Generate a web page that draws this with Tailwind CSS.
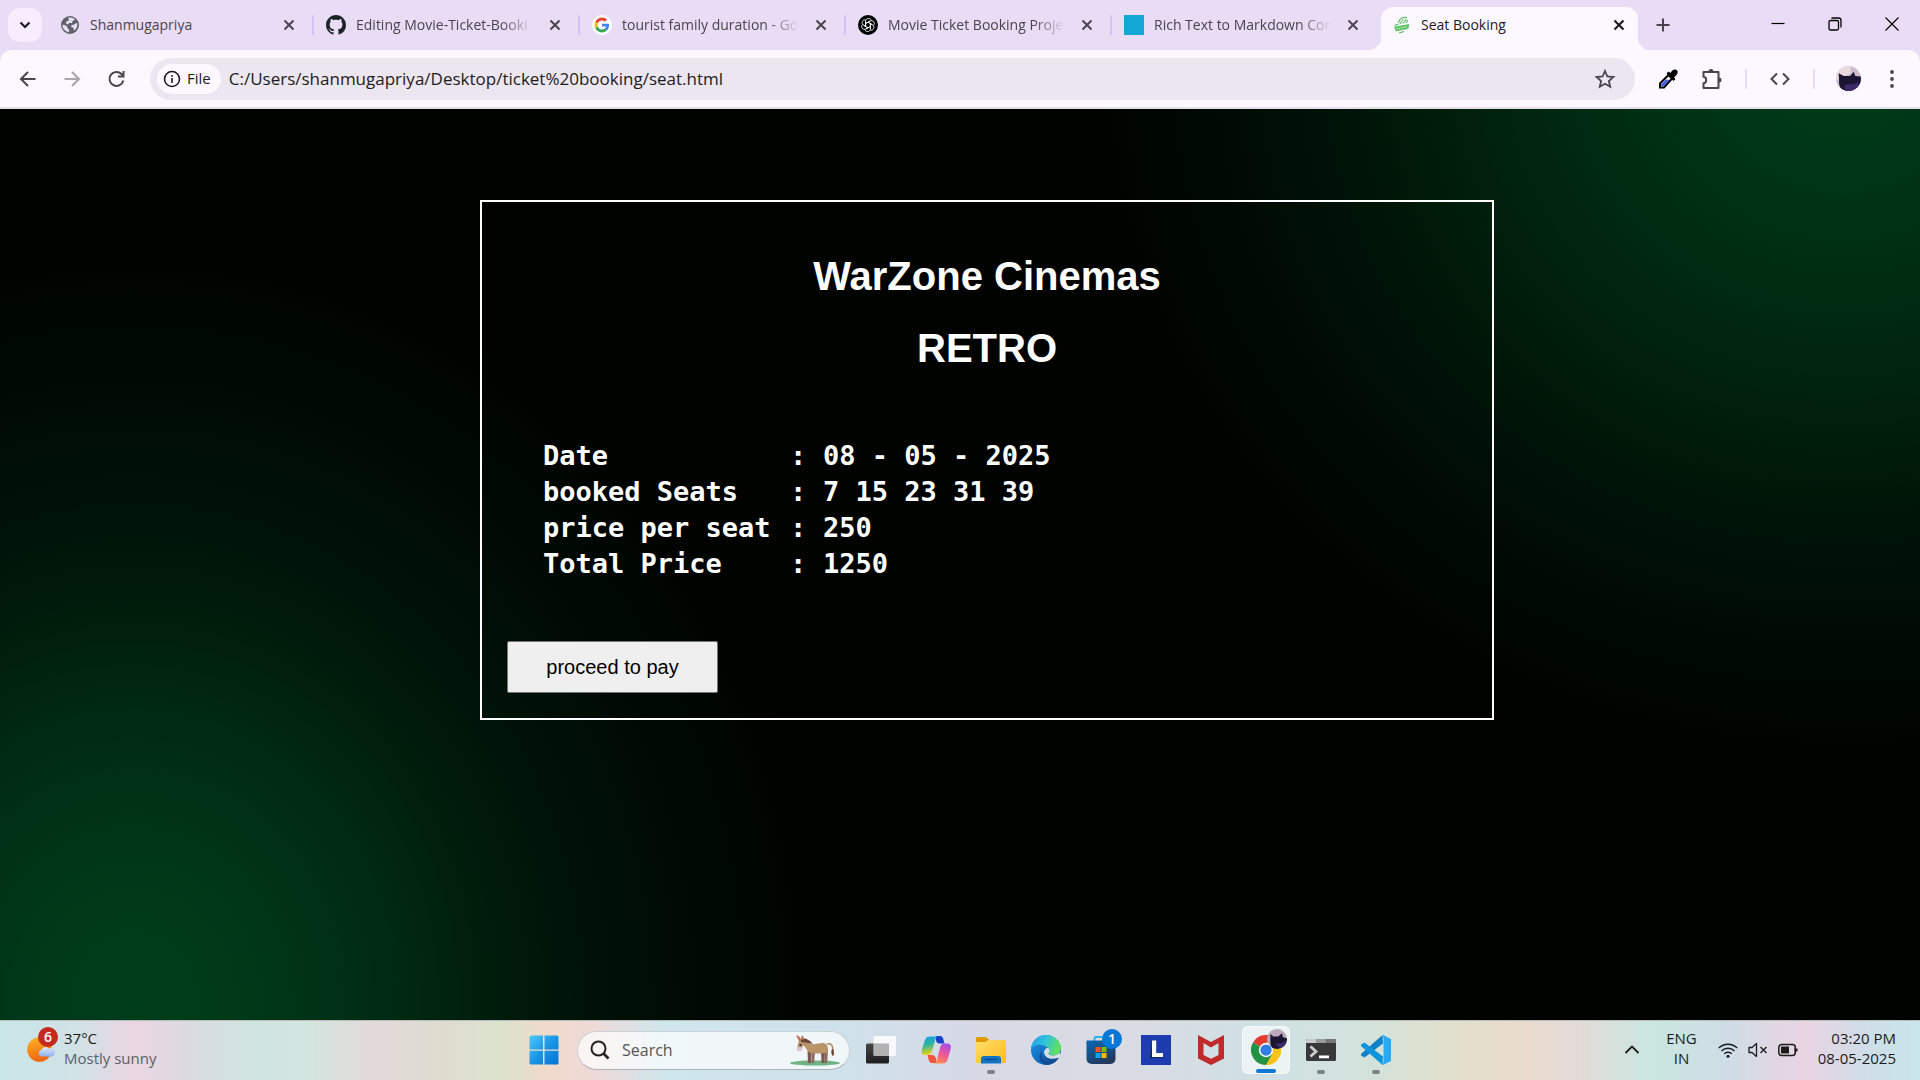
<!DOCTYPE html>
<html lang="en">
<head>
<meta charset="utf-8">
<title>Seat Booking</title>
<meta name="viewport" content="width=device-width, initial-scale=1">
<script src="https://cdn.jsdelivr.net/npm/@tailwindcss/browser@4"></script>
</head>
<body class="flex h-screen flex-col overflow-hidden bg-black font-['Open_Sans',sans-serif]">

<!-- Browser chrome -->
<header class="shrink-0 bg-[#e9ddf5] text-[#49454f]">
  <div class="flex h-[50px] pl-2">
    <button aria-label="Search tabs" class="mt-2 mr-1.5 grid size-[34px] shrink-0 place-items-center rounded-xl bg-[#f7edfe] text-[#1d1b20]">
      <svg class="size-5" viewBox="0 0 20 20" fill="none" stroke="currentColor" stroke-width="2.2"><path d="M5.500 7.500 10 12l4.500-4.500"/></svg>
    </button>

    <div class="flex w-[266px] min-w-0 items-center pl-3">
      <svg class="size-5 shrink-0" viewBox="0 0 20 20"><circle cx="10" cy="10" r="9" fill="#5f6368"/><path d="M2.500 9.500c2 .8 3.200.6 4.300 1.800 1 1 .4 1.900 1.500 2.600.9.600 1 1.200.7 3.300C5 16.500 2.200 13.500 2.500 9.500zM8.200 2.800c2.800-.6 5 .2 6.600 1.700-.8 1.200-1.600.7-2.200 1.600-.5.8.1 1.700-1 2-1.100.3-1.200-.6-2.300-.2-1.200.5-.6 1.600-1.800 1.400-1.300-.2-1.700-1.500-1.300-2.500.6-1.300 2.500-.6 2.700-1.900.1-.9-.9-1.200-.7-2.100zM17.300 8c.4 3-.7 5.700-3 7.400-.8-.6-.2-1.600-.9-2.400-.7-.8-2-.3-2.200-1.500-.1-1.100.8-1.700 2-1.800 1.700-.1 1.600-1.500 4.100-1.700z" fill="#e9ddf5"/></svg>
      <span class="mr-3 ml-2.5 min-w-0 flex-1 overflow-hidden text-sm leading-6 whitespace-nowrap">Shanmugapriya</span>
      <button aria-label="Close tab" class="grid size-5 shrink-0 place-items-center"><svg class="size-3" viewBox="0 0 12 12" stroke="currentColor" stroke-width="2"><path d="m1.500 1.500 9 9m0-9-9 9"/></svg></button>
      <span class="ml-[13px] h-5 w-0.5 shrink-0 rounded bg-[#d4c0fb]"></span>
    </div>

    <div class="flex w-[266px] min-w-0 items-center pl-3">
      <svg class="size-5 shrink-0" viewBox="0 0 16 16" fill="#1f2328"><path d="M8 0C3.580 0 0 3.580 0 8c0 3.540 2.290 6.530 5.470 7.590.4.070.55-.17.55-.38 0-.19-.01-.82-.01-1.490-2.010.37-2.530-.49-2.690-.94-.09-.23-.48-.94-.82-1.130-.28-.15-.68-.52-.01-.53.63-.01 1.080.58 1.230.82.72 1.210 1.870.87 2.330.66.07-.52.28-.87.51-1.070-1.780-.2-3.640-.89-3.640-3.950 0-.87.31-1.590.82-2.150-.08-.2-.36-1.020.08-2.120 0 0 .67-.21 2.200.82.64-.18 1.320-.27 2-.27s1.360.09 2 .27c1.530-1.040 2.200-.82 2.200-.82.44 1.100.16 1.920.08 2.120.51.56.82 1.270.82 2.150 0 3.070-1.870 3.750-3.650 3.950.29.25.54.73.54 1.480 0 1.070-.01 1.930-.01 2.200 0 .21.15.46.55.38A8.010 8.010 0 0 0 16 8c0-4.420-3.580-8-8-8z"/></svg>
      <span class="mr-3 ml-2.5 min-w-0 flex-1 overflow-hidden text-sm leading-6 whitespace-nowrap [mask-image:linear-gradient(to_right,black_82%,transparent)]">Editing Movie-Ticket-Booki</span>
      <button aria-label="Close tab" class="grid size-5 shrink-0 place-items-center"><svg class="size-3" viewBox="0 0 12 12" stroke="currentColor" stroke-width="2"><path d="m1.500 1.500 9 9m0-9-9 9"/></svg></button>
      <span class="ml-[13px] h-5 w-0.5 shrink-0 rounded bg-[#d4c0fb]"></span>
    </div>

    <div class="flex w-[266px] min-w-0 items-center pl-3">
      <svg class="size-5 shrink-0" viewBox="0 0 20 20"><circle cx="10" cy="10" r="10" fill="#fff"/><g transform="translate(2.600 2.600) scale(.308)"><path fill="#EA4335" d="M24 9.500c3.540 0 6.710 1.220 9.210 3.600l6.850-6.850C35.900 2.380 30.470 0 24 0 14.620 0 6.510 5.380 2.560 13.220l7.980 6.190C12.430 13.720 17.740 9.500 24 9.500z"/><path fill="#4285F4" d="M46.980 24.550c0-1.570-.15-3.090-.38-4.550H24v9.020h12.940c-.58 2.960-2.260 5.480-4.780 7.180l7.730 6c4.510-4.180 7.090-10.360 7.090-17.650z"/><path fill="#FBBC05" d="M10.530 28.590c-.48-1.450-.76-2.990-.76-4.590s.27-3.140.76-4.590l-7.980-6.190C.92 16.460 0 20.120 0 24c0 3.880.92 7.540 2.560 10.780l7.970-6.190z"/><path fill="#34A853" d="M24 48c6.480 0 11.930-2.130 15.890-5.810l-7.730-6c-2.150 1.450-4.920 2.300-8.160 2.300-6.260 0-11.570-4.220-13.470-9.910l-7.980 6.190C6.510 42.620 14.620 48 24 48z"/></g></svg>
      <span class="mr-3 ml-2.5 min-w-0 flex-1 overflow-hidden text-sm leading-6 whitespace-nowrap [mask-image:linear-gradient(to_right,black_82%,transparent)]">tourist family duration - Go</span>
      <button aria-label="Close tab" class="grid size-5 shrink-0 place-items-center"><svg class="size-3" viewBox="0 0 12 12" stroke="currentColor" stroke-width="2"><path d="m1.500 1.500 9 9m0-9-9 9"/></svg></button>
      <span class="ml-[13px] h-5 w-0.5 shrink-0 rounded bg-[#d4c0fb]"></span>
    </div>

    <div class="flex w-[266px] min-w-0 items-center pl-3">
      <svg class="size-5 shrink-0" viewBox="0 0 20 20"><circle cx="10" cy="10" r="10" fill="#000"/><g fill="none" stroke="#fff" stroke-width=".8"><path id="knot" d="M7.600 11.400V6.400c0-3.600 4.900-4 5.600-.9M7.600 8.600l4.300-2.500"/><use href="#knot" transform="rotate(60 10 10)"/><use href="#knot" transform="rotate(120 10 10)"/><use href="#knot" transform="rotate(180 10 10)"/><use href="#knot" transform="rotate(240 10 10)"/><use href="#knot" transform="rotate(300 10 10)"/></g></svg>
      <span class="mr-3 ml-2.5 min-w-0 flex-1 overflow-hidden text-sm leading-6 whitespace-nowrap [mask-image:linear-gradient(to_right,black_82%,transparent)]">Movie Ticket Booking Proje</span>
      <button aria-label="Close tab" class="grid size-5 shrink-0 place-items-center"><svg class="size-3" viewBox="0 0 12 12" stroke="currentColor" stroke-width="2"><path d="m1.500 1.500 9 9m0-9-9 9"/></svg></button>
      <span class="ml-[13px] h-5 w-0.5 shrink-0 rounded bg-[#d4c0fb]"></span>
    </div>

    <div class="flex w-[266px] min-w-0 items-center pl-3">
      <span class="size-5 shrink-0 bg-[#14a8d6]"></span>
      <span class="mr-3 ml-2.5 min-w-0 flex-1 overflow-hidden text-sm leading-6 whitespace-nowrap [mask-image:linear-gradient(to_right,black_82%,transparent)]">Rich Text to Markdown Con</span>
      <button aria-label="Close tab" class="mr-[15px] grid size-5 shrink-0 place-items-center"><svg class="size-3" viewBox="0 0 12 12" stroke="currentColor" stroke-width="2"><path d="m1.500 1.500 9 9m0-9-9 9"/></svg></button>
    </div>

    <div class="relative mt-[7px] ml-[3px] flex h-[43px] w-[257px] min-w-0 items-center rounded-t-xl bg-[#fdf7ff] pr-[9px] pb-[7px] pl-3 text-[#1d1b20]">
      <span class="absolute bottom-0 -left-3 size-3 bg-[radial-gradient(circle_at_0_0,transparent_12px,#fdf7ff_12px)]"></span>
      <span class="absolute -right-3 bottom-0 size-3 bg-[radial-gradient(circle_at_100%_0,transparent_12px,#fdf7ff_12px)]"></span>
      <svg class="size-[18px] shrink-0" viewBox="0 0 18 18" fill="none" stroke="#4fba57"><path d="m1.500 11 14.500-2.500-1 4L3 15z" fill="#5cc463" stroke-width=".6"/><path d="m3.500 13 10.500-2.200" stroke="#d9f5da" stroke-dasharray="1.500 1"/><path d="M5.500 7C6 3 9.500 1 14 1.500M7 8l3-4.500M10 7.500 13.500 3M13 7l2-3M1.500 9.500l4-1.500M6 17l5-1.500" stroke-width="1.100"/></svg>
      <span class="mr-3 ml-2.5 min-w-0 flex-1 overflow-hidden text-sm leading-6 whitespace-nowrap">Seat Booking</span>
      <button aria-label="Close tab" class="grid size-5 shrink-0 place-items-center"><svg class="size-3" viewBox="0 0 12 12" stroke="currentColor" stroke-width="2.200"><path d="m1.500 1.500 9 9m0-9-9 9"/></svg></button>
    </div>

    <button aria-label="New tab" class="ml-[13px] grid size-6 shrink-0 place-items-center self-center"><svg class="size-4" viewBox="0 0 16 16" stroke="currentColor" stroke-width="2"><path d="M8 1.500v13M1.500 8h13"/></svg></button>
    <div class="ml-auto flex h-12 shrink-0 text-black">
      <button aria-label="Minimize" class="grid w-[57px] place-items-center"><svg class="size-3.5" viewBox="0 0 14 14" stroke="currentColor" stroke-width="1.200"><path d="M.5 6.500h13"/></svg></button>
      <button aria-label="Restore" class="grid w-[57px] place-items-center"><svg class="size-3.5" viewBox="0 0 14 14" fill="none" stroke="currentColor" stroke-width="1.300"><rect x="1" y="3.500" width="9.500" height="9.500" rx="1.500"/><path d="M3.500 1h7q2.500 0 2.500 2.500v7"/></svg></button>
      <button aria-label="Close window" class="grid w-[57px] place-items-center"><svg class="size-3.5" viewBox="0 0 14 14" stroke="currentColor" stroke-width="1.200"><path d="m.5.5 13 13m0-13-13 13"/></svg></button>
    </div>
  </div>

  <div class="flex h-[59px] items-center rounded-t-xl border-b-2 border-[#e6dfe9] bg-[#fdf7ff] px-2.5">
    <nav aria-label="History" class="flex shrink-0 gap-2">
      <button aria-label="Back" class="grid size-9 place-items-center"><svg class="size-5" viewBox="0 0 20 20" fill="none" stroke="currentColor" stroke-width="2"><path d="M17.500 10H3m7-7-7 7 7 7"/></svg></button>
      <button aria-label="Forward" class="grid size-9 place-items-center text-[#a9a4ad]"><svg class="size-5" viewBox="0 0 20 20" fill="none" stroke="currentColor" stroke-width="2"><path d="M2.500 10H17m-7-7 7 7-7 7"/></svg></button>
      <button aria-label="Reload" class="grid size-9 place-items-center"><svg class="size-5" viewBox="0 0 20 20" fill="none" stroke="currentColor" stroke-width="2"><path d="M17.300 11.500A7 7 0 1 1 15.500 5l2 2"/><path d="M17.500 2v5.500H12"/></svg></button>
    </nav>
    <div class="ml-4 flex h-[42px] min-w-0 flex-1 items-center rounded-full bg-[#ece6f0] pr-[18px] pl-[7px] text-[#1d1b20]">
      <button class="flex h-[30px] shrink-0 items-center gap-1.5 rounded-full bg-[#fdf7ff] px-1.5 pr-2.5 text-[15px] font-medium">
        <svg class="size-[18px]" viewBox="0 0 18 18" fill="none" stroke="currentColor" stroke-width="1.600"><circle cx="9" cy="9" r="7.500"/><path d="M9 8v5M9 5v1.800"/></svg>File
      </button>
      <input aria-label="Address" value="C:/Users/shanmugapriya/Desktop/ticket%20booking/seat.html" class="ml-2 min-w-0 flex-1 bg-transparent text-[17px] leading-6 outline-none">
      <button aria-label="Bookmark this tab" class="shrink-0 text-[#49454f]"><svg class="size-6" viewBox="0 0 24 24" fill="none" stroke="currentColor" stroke-width="1.800"><path d="m12 4 2.400 5.500 6 .5-4.500 4 1.300 5.800-5.200-3-5.200 3L8.100 14l-4.500-4 6-.5z"/></svg></button>
    </div>
    <div class="ml-[15px] flex shrink-0 items-center">
      <button aria-label="Color picker" class="grid size-9 place-items-center"><svg class="size-5" viewBox="0 0 20 20"><path d="M2 18.500v-4L10.500 6l3.500 3.500L6 18.500z" fill="#fff" stroke="#000" stroke-width="2"/><path d="M3.200 17.300V15L8 10.500l3.500.5-6 6.300z" fill="#4763e0"/><path d="m8.500 4.500 2-2 2 1.500c1-2 3-4 5-3.400 2.500.8 3 3.400 1 5.400l-2.500 2.500L17.500 10l-2 2z"/></svg></button>
      <button aria-label="Extensions" class="ml-2 grid size-9 place-items-center"><svg class="size-6" viewBox="0 0 24 24" fill="none" stroke="currentColor" stroke-width="2"><path d="M3.500 5h15v16h-15v-4.700c3.600-.4 3.600-6.200 0-6.600z" stroke-linejoin="round"/><path d="M8.500 4.500a2.500 2.500 0 0 1 5 0zM19 10.500a2.500 2.500 0 0 1 0 5z" fill="currentColor" stroke="none"/></svg></button>
      <span class="mx-[15px] h-5 w-0.5 bg-[#e8dbfc]"></span>
      <button aria-label="Developer tools" class="grid size-9 place-items-center"><svg class="size-5" viewBox="0 0 20 20" fill="none" stroke="currentColor" stroke-width="2"><path d="M7 4.500 1.500 10 7 15.500M13 4.500l5.500 5.500-5.500 5.500"/></svg></button>
      <span class="mx-[15px] h-5 w-0.5 bg-[#e8dbfc]"></span>
      <button aria-label="Profile" class="grid size-9 place-items-center"><svg class="size-[25px] rounded-full" viewBox="0 0 24 24"><rect width="24" height="24" fill="#cdbccb"/><path d="M0 0h14v7L0 14z" fill="#ead9de"/><path d="m2.500 7 5 2.500h6L17 5.500l1.500 4L24 10v14H7c-3-2-4.500-6-4-10z" fill="#1b1433"/><path d="M8 19c3-3 8 1 13-4l1 6-6 3H9z" fill="#3c2a6c"/></svg></button>
      <button aria-label="Menu" class="ml-2 grid size-9 place-items-center"><svg class="size-5" viewBox="0 0 20 20" fill="currentColor"><circle cx="10" cy="3" r="1.900"/><circle cx="10" cy="10" r="1.900"/><circle cx="10" cy="17" r="1.900"/></svg></button>
    </div>
  </div>
</header>

<!-- Booking summary -->
<main class="min-h-0 flex-1 overflow-hidden bg-[#000300] bg-[radial-gradient(ellipse_36%_84%_at_7%_98%,#003d1b_0%,#003a19_14%,#003116_28%,#002811_40%,#001b0b_53%,#001107_67%,#000a04_82%,transparent_100%),radial-gradient(ellipse_40%_78%_at_96%_-5%,#003a19_0%,#003617_15%,#002d12_30%,#00230f_45%,#001909_58%,#001006_71%,#000803_86%,transparent_100%)] pt-[91px]">
  <section class="ml-[25%] box-content w-1/2 border-2 border-white p-[25px] font-['Liberation_Sans',Arial,sans-serif]">
    <h1 class="mt-[27px] text-center text-[40px] leading-[45px] font-bold text-white">WarZone Cinemas</h1>
    <h1 class="mt-[27px] text-center text-[40px] leading-[45px] font-bold text-white">RETRO</h1>
    <table class="mt-[67px] ml-9 font-['DejaVu_Sans_Mono',monospace] text-[27px] leading-9 font-bold whitespace-nowrap text-white">
      <tbody>
        <tr><th scope="row" class="w-[247px] p-0 text-left">Date</th><td class="w-[33px] p-0">:</td><td class="p-0">08 - 05 - 2025</td></tr>
        <tr><th scope="row" class="p-0 text-left">booked Seats</th><td class="p-0">:</td><td class="p-0">7 15 23 31 39</td></tr>
        <tr><th scope="row" class="p-0 text-left">price per seat</th><td class="p-0">:</td><td class="p-0">250</td></tr>
        <tr><th scope="row" class="p-0 text-left">Total Price</th><td class="p-0">:</td><td class="p-0">1250</td></tr>
      </tbody>
    </table>
    <button class="mt-[59px] block h-[52px] w-[211px] rounded-[2px] border border-[#767676] bg-[#efefef] text-xl text-black">proceed to pay</button>
  </section>
</main>

<!-- Taskbar -->
<footer class="grid h-[60px] shrink-0 grid-cols-[1fr_auto_1fr] items-center border-t border-[#b9bcbd] bg-[linear-gradient(90deg,#c8e6e8_0%,#d0e2e6_4%,#ead5e1_7%,#dcdae1_9.500%,#cfe4e1_13%,#d3e5df_16%,#e2d9da_19.500%,#dfdccf_23%,#dbe3cd_26%,#f0dacb_28.500%,#efd9d7_31%,#cfe6ec_34.500%,#cfe1ea_44%,#d6dae6_50%,#dbdbe3_58%,#cfe0e3_66%,#d2e3dc_71%,#dfe0cd_75%,#e9dbcb_79%,#e4dad6_82%,#c9e6df_86%,#cfdde6_90%,#ead4e2_94%,#d0dde8_97%,#c6e6ea_100%)] pb-px text-[15px] leading-5 text-[#1b1b1b]">
  <button class="flex items-center justify-self-start pl-[27px] text-left">
    <span class="relative mr-[6px] block size-[31px]">
      <svg class="size-[31px]" viewBox="0 0 31 31"><defs><linearGradient id="sun" x2=".3" y2="1"><stop stop-color="#fbb829"/><stop offset="1" stop-color="#f2660d"/></linearGradient><linearGradient id="cloud" x2="0" y2="1"><stop stop-color="#dce9fb"/><stop offset="1" stop-color="#8fb2ee"/></linearGradient></defs><circle cx="12.500" cy="14.500" r="12.300" fill="url(#sun)"/><path d="M14 21.500a3.500 3.500 0 0 1 0-6.500 5 5 0 0 1 8-1.500 3.500 3.500 0 0 1 3.500 8z" fill="url(#cloud)"/></svg>
      <span class="absolute -top-2 left-[11px] grid size-5 place-items-center rounded-full bg-[#c42b1c] text-sm leading-5 font-semibold text-white">6</span>
    </span>
    <span class="block pb-1">37°C<span class="block text-[#5c6062]">Mostly sunny</span></span>
  </button>

  <div class="flex items-center gap-[7px]">
    <button aria-label="Start" class="grid size-12 place-items-center"><svg class="size-[30px]" viewBox="0 0 30 30"><defs><linearGradient id="win" x2="1" y2="1"><stop stop-color="#4cc9fb"/><stop offset=".5" stop-color="#1a95e6"/><stop offset="1" stop-color="#0672d2"/></linearGradient></defs><path d="M2 .5h12v14H.5V2A1.500 1.500 0 0 1 2 .5zM15.500.5h12.500a1.500 1.500 0 0 1 1.500 1.500v12.500h-14zM.5 15.800h13.500v13.700H2A1.500 1.500 0 0 1 .5 28zM15.500 15.800h14V28a1.500 1.500 0 0 1-1.500 1.500H15.500z" fill="url(#win)"/></svg></button>
    <label class="ml-0.5 flex h-[39px] w-[273px] items-center rounded-full border border-b-[#aab4ba] border-[#c9d2d6] bg-white/70 pr-[9px] pl-3">
      <svg class="size-5 shrink-0" viewBox="0 0 20 20" fill="none" stroke="#222" stroke-width="2"><circle cx="8.500" cy="8.500" r="7"/><path d="m13.500 13.500 5 5" stroke-width="2.600"/></svg>
      <input placeholder="Search" aria-label="Search" class="ml-3 min-w-0 flex-1 bg-transparent text-base outline-none placeholder:text-[#555]">
      <svg class="h-8 w-[51px] shrink-0" viewBox="0 0 51 32"><ellipse cx="26" cy="29" rx="25" ry="2.600" fill="#6fb283"/><path d="M38 10c4-1 6 1 6 7" fill="none" stroke="#a98763" stroke-width="1.500"/><path d="M43 15c2 0 3 5 1 7-2-1-2-5-1-7z" fill="#6d4a33"/><path d="M18.500 17h4l-.5 12h-3zM32 17h4l-.5 12h-3z" fill="#7b5a52"/><path d="M22.500 18h3.500l-1 11h-2.500zM36 14h3l-.8 15h-2.700z" fill="#8e6a5c"/><path d="M10 6c4-1 8 2 12 4 5 1 10-2 14-.5 3 1 3.500 6 2.500 9-6 1-13 2-19-.5l-5-7-2.500 5c-2 1.500-5 1-4-1.500z" fill="#b89468"/><path d="M8.500 13c-1 2-.5 4.500 2 4.500 2 0 3-2 3.500-4z" fill="#d9cbd0"/><path d="M12 4.500c5-1 9 2 12 5.500-5-1-8-2-12-2z" fill="#6b4636"/><path d="m10 7-3-5.500c3 0 5 2 5 5zM12.500 6V1c2 1 3 3 2 5z" fill="#c2735c"/><circle cx="11.500" cy="11" r="1.100" fill="#2b2240"/></svg>
    </label>
    <button aria-label="Task view" class="grid size-12 place-items-center"><svg class="size-[30px]" viewBox="0 0 30 30"><defs><linearGradient id="tv" x2="0" y2="1"><stop stop-color="#454545"/><stop offset="1" stop-color="#1e1e1e"/></linearGradient></defs><rect y="8.500" width="23" height="20" rx="1.500" fill="url(#tv)"/><rect x="7.500" y="1" width="22.500" height="20" rx="1.500" fill="#fff" fill-opacity=".82"/><path d="M7.500 8.500H23V21H9a1.500 1.500 0 0 1-1.500-1.500z" fill="#9c9c9c" fill-opacity=".65"/></svg></button>
    <button aria-label="Copilot" class="grid size-12 place-items-center"><svg class="size-[30px]" viewBox="0 0 30 30"><defs><linearGradient id="cp1" x2=".2" y2="1"><stop stop-color="#12a3ef"/><stop offset=".5" stop-color="#2fb79a"/><stop offset="1" stop-color="#e8d21c"/></linearGradient><linearGradient id="cp2" x1=".7" x2=".3" y2="1"><stop stop-color="#a44de8"/><stop offset=".5" stop-color="#f0559a"/><stop offset="1" stop-color="#fb8d4a"/></linearGradient></defs><path d="M15 1h4c2 0 3 1.500 3.500 4l1 3.500h-5c-3 0-4-3-3.500-7.500z" fill="#173fc9"/><path d="M9 1.500h8.500c-2 0-3 2-3.600 4.500l-3 10.500C10 19 9 20 6 20H3.500C.5 20 0 17.500 1 14L4 5c1-2.500 2-3.500 5-3.500z" fill="url(#cp1)"/><path d="M15 28h-4c-2 0-3-1.500-3.500-4L6.600 20H11c3 0 5 3 4 8z" fill="#f1543f"/><path d="M21 28.500h-8.500c2 0 3-2 3.600-4.500l3-11.500C20 9.500 21 8.500 24 8.500h2.500c3 0 4 2.500 3 6L26.500 25c-1 2.500-2.500 3.500-5.500 3.500z" fill="url(#cp2)"/></svg></button>
    <button aria-label="File Explorer" class="relative grid size-12 place-items-center"><svg class="size-[30px]" viewBox="0 0 30 30"><defs><linearGradient id="fe" x2="1" y2="1"><stop stop-color="#ffdd6b"/><stop offset="1" stop-color="#fbbd1f"/></linearGradient></defs><path d="M0 3.500A1.500 1.500 0 0 1 1.500 2h8L13 4.500V9H0z" fill="#dc9a08"/><path d="M0 7h9.500l3-2H29a1 1 0 0 1 1 1v22H0z" fill="url(#fe)"/><path d="M5 28.500V24a3 3 0 0 1 3-3h14a3 3 0 0 1 3 3v4.500z" fill="#1272c4"/><path d="M9 24.500h12" stroke="#0a4a8c" stroke-width="1.300"/></svg><span class="absolute bottom-0 h-1 w-2 rounded-full bg-[#7d8084]"></span></button>
    <button aria-label="Edge" class="grid size-12 place-items-center"><svg class="size-[30px]" viewBox="0 0 30 30"><defs><linearGradient id="ed1" x2="1" y2=".3"><stop stop-color="#1b9de2"/><stop offset=".5" stop-color="#2fc2df"/><stop offset="1" stop-color="#5fe05f"/></linearGradient><linearGradient id="ed2" x2=".6" y2="1"><stop stop-color="#1f9ae0"/><stop offset="1" stop-color="#0c5cb6"/></linearGradient></defs><circle cx="15" cy="15" r="15" fill="url(#ed2)"/><path d="M0 13.500C1 5.500 7 0 15 0s15 6 15 13c0 4.500-3.500 7.500-8 7.500-3 0-5-1-4.500-2.200 1.500-1.500 1.300-3.800-.5-5.500C12.500 9 4 8.500 0 13.500z" fill="url(#ed1)"/><path d="M11 15c-2 7 3 11.500 9 11.500 3 0 5-.8 7-2.500-3 4-7 6-12 6-6-1.500-9-9-4-15z" fill="#124f96"/><path d="M17 12.800c2 1.700 2 4 .5 5.500-.6 1.200 1.500 2.200 4.500 2.200 3 0 5.500-1.200 7-3.200l.4 3.500L27 24.500c-6 2-13 0-14-5.500-.4-3 1.500-6 4-6.200z" fill="#d8dde5"/><path d="M13 17c0 5 5 8.500 14 6l1 0c-3 4-10 4-13 1-2-2-2.500-4-2-7z" fill="#124f96"/></svg></button>
    <button aria-label="Microsoft Store" class="relative grid size-12 place-items-center"><svg class="size-[30px]" viewBox="0 0 30 30"><defs><linearGradient id="st" x2=".5" y2="1"><stop stop-color="#0669b8"/><stop offset="1" stop-color="#243a5e"/></linearGradient></defs><path d="M8.500 6V3.500A1.500 1.500 0 0 1 10 2h10a1.500 1.500 0 0 1 1.500 1.500V6" fill="none" stroke="#24b4f0" stroke-width="2"/><path d="M.5 5.500h29V24a5 5 0 0 1-5 5h-19a5 5 0 0 1-5-5z" fill="url(#st)"/><path d="M9.500 12h5v5h-5z" fill="#f25022"/><path d="M15.500 12h5v5h-5z" fill="#7fba00"/><path d="M9.500 18h5v5h-5z" fill="#00a4ef"/><path d="M15.500 18h5v5h-5z" fill="#ffb900"/></svg><span class="absolute top-[3px] right-[3px] grid size-5 place-items-center rounded-full bg-[#0078d7] text-sm leading-5 font-semibold text-white">1</span></button>
    <button aria-label="Lenovo Vantage" class="grid size-12 place-items-center"><svg class="size-[30px]" viewBox="0 0 30 30"><path d="M0 0h30v30H0z" fill="#1f3bb0"/><path d="m11 6-2 17 13 0-1-1H11z" fill="#0f2a4a"/><path d="M11 5.500h4.200v12.500H22v4H11z" fill="#fff"/></svg></button>
    <button aria-label="McAfee" class="grid size-12 place-items-center"><svg class="size-[30px]" viewBox="0 0 30 30"><path d="m2 0 13 7L28 0v23.500L15 30 2 23.500zm5.500 8v12L15 23.800l7.500-3.800V8L15 12.500z" fill="#c02a2b" fill-rule="evenodd"/></svg></button>
    <button aria-label="Chrome" class="relative grid size-12 place-items-center rounded-md border border-white/60 bg-white/60"><svg class="size-[30px]" viewBox="0 0 48 48"><path d="M24 24 3.200 12a24 24 0 0 1 41.600 0z" fill="#e33b2e"/><path d="M24 24 44.800 12A24 24 0 0 1 24 48z" fill="#fcc21b"/><path d="m24 24-20.800-12A24 24 0 0 0 24 48l10.400-18z" fill="#229342"/><path d="M24 12h20.800l-4 4L34 24z" fill="#e33b2e"/><path d="M24 12h20.800A24 24 0 0 1 24 48l10.400-18z" fill="#fcc21b"/><circle cx="24" cy="24" r="11.500" fill="#fff"/><circle cx="24" cy="24" r="9" fill="#2f7de9"/></svg><svg class="absolute top-0.5 right-0.5 size-5 rounded-full" viewBox="0 0 24 24"><rect width="24" height="24" fill="#b9a9bb"/><path d="m4 6 3.500 3h6L18 5l1 5 5 1v13H7c-2-3-3-5-3-9z" fill="#1b1433"/><path d="M9 18c4-2 8 1 13-4l1 6-6 3z" fill="#3c2a6c"/></svg><span class="absolute bottom-0 h-1 w-5 rounded-full bg-[#0f78d4]"></span></button>
    <button aria-label="Terminal" class="relative grid size-12 place-items-center"><svg class="size-[30px]" viewBox="0 0 30 30"><path d="M1.500 4h27A1.500 1.500 0 0 1 30 5.500v19a1.500 1.500 0 0 1-1.500 1.500h-27A1.500 1.500 0 0 1 0 24.500v-19A1.500 1.500 0 0 1 1.500 4z" fill="#383838"/><path d="M1.500 4H10v4H0V5.500A1.500 1.500 0 0 1 1.500 4z" fill="#c9c9c9"/><path d="M10 4h10v4H10z" fill="#9b9b9b"/><path d="M20 4h8.500A1.500 1.500 0 0 1 30 5.500V8H20z" fill="#767676"/><path d="m4.500 11.500 5.500 5-5.500 5" fill="none" stroke="#d0d0d0" stroke-width="2.800"/><path d="M13 20.500h10v2.800H13z" fill="#fff"/></svg><span class="absolute bottom-0 h-1 w-2 rounded-full bg-[#7d8084]"></span></button>
    <button aria-label="Visual Studio Code" class="relative grid size-12 place-items-center"><svg class="size-[30px]" viewBox="0 0 30 30"><path d="M22 8.500 3.500 22.500 0 20.500v-1.500L21.500 0z" fill="#1080c8"/><path d="M22 21.500 3.500 7.500 0 9.500V11l21.500 19z" fill="#0f95dc"/><path d="m21.500 0 1 .2L30 4v22l-7.500 3.800-1.500.2 1.500-3V3z" fill="#2aa9f2"/></svg><span class="absolute bottom-0 h-1 w-2 rounded-full bg-[#7d8084]"></span></button>
  </div>

  <div class="flex items-center justify-self-end pr-6">
    <button aria-label="Show hidden icons" class="mr-[26px] grid size-4 place-items-center"><svg class="size-4" viewBox="0 0 16 16" fill="none" stroke="currentColor" stroke-width="1.800"><path d="m1.500 11 6.500-6.500 6.500 6.500"/></svg></button>
    <button class="mr-[21px] pb-1 text-center">ENG<span class="block">IN</span></button>
    <button aria-label="Network, sound and battery" class="mr-5 flex items-center gap-2.5">
      <svg class="size-5" viewBox="0 0 20 20" fill="none" stroke="currentColor" stroke-width="1.400"><path d="M.8 8a13 13 0 0 1 18.400 0M3.500 11a9.200 9.200 0 0 1 13 0M6.200 13.800a5.400 5.400 0 0 1 7.600 0"/><circle cx="10" cy="16.300" r="1.500" fill="currentColor" stroke="none"/></svg>
      <svg class="size-5" viewBox="0 0 20 20" fill="none" stroke="currentColor" stroke-width="1.300"><path d="M1 7.500h3L8.500 3.500v13L4 12.500H1z" stroke-linejoin="round"/><path d="m12.500 7 6 6m0-6-6 6"/></svg>
      <svg class="size-5" viewBox="0 0 20 20" fill="none" stroke="currentColor" stroke-width="1.500"><rect x=".8" y="4.500" width="16.500" height="11" rx="3"/><path d="M3 6.500h8v7H3z" fill="currentColor" stroke="none"/><path d="M18 8.500v3" stroke-width="3"/></svg>
    </button>
    <button class="pb-1 text-right">03:20 PM<span class="block">08-05-2025</span></button>
  </div>
</footer>
</body>
</html>
